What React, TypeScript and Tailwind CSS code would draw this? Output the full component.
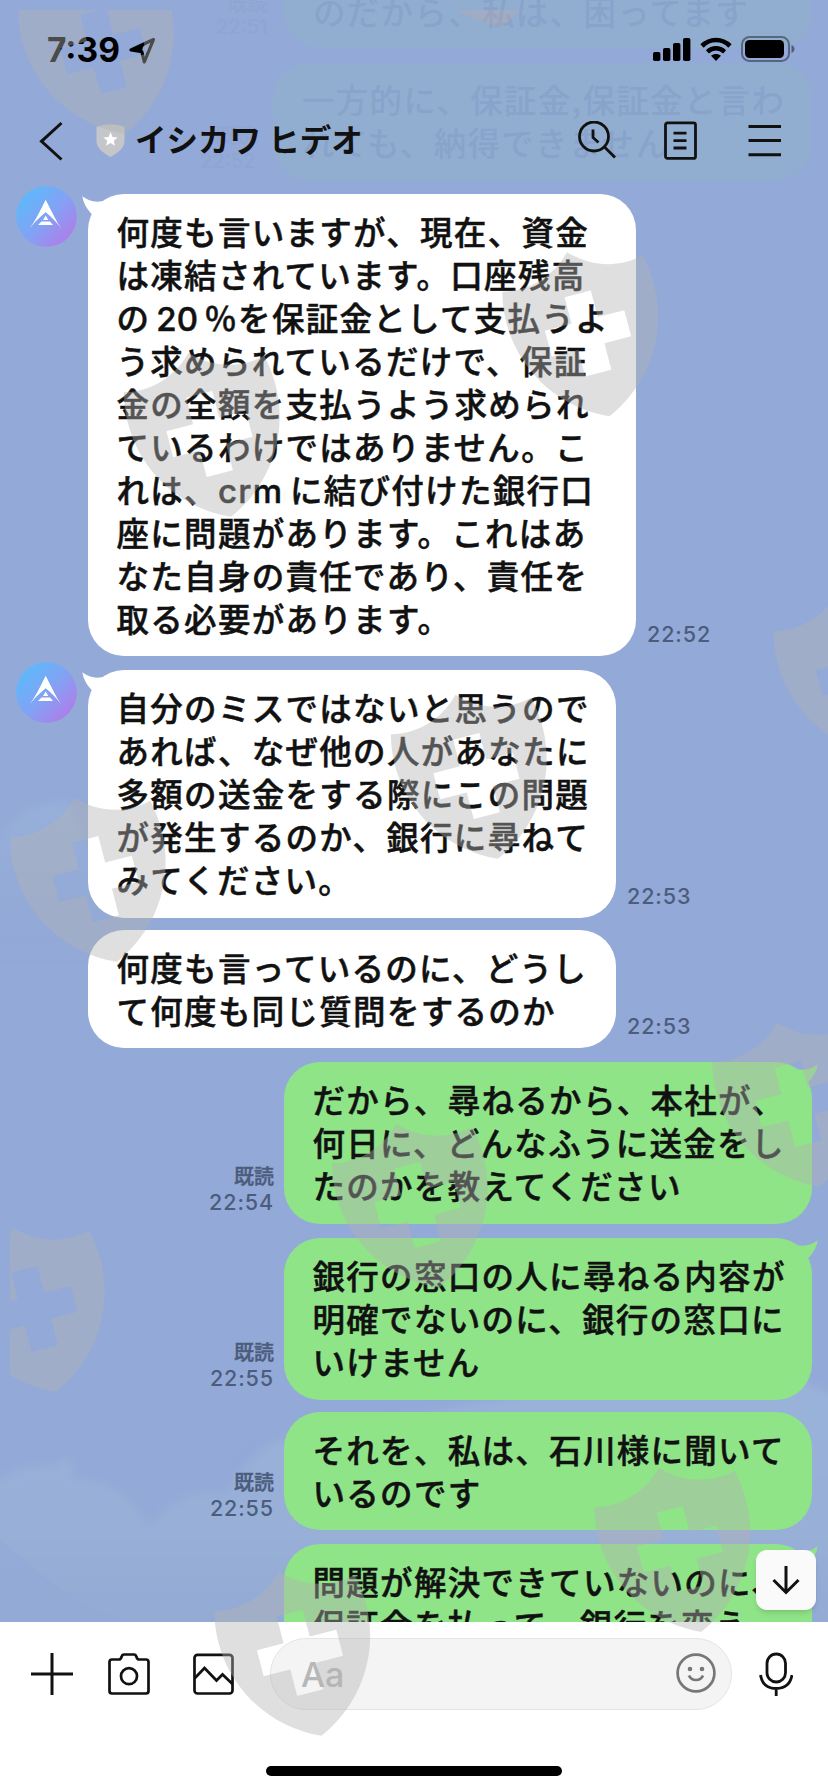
import type { ReactNode } from "react";

type Message = {
  side: "in" | "out";
  lines: ReactNode[];
  time?: string;
  first?: boolean;
  size: string;
  gap?: string;
};

const SHIELDS = [
  [103.5, 51],
  [209.5, 434],
  [588, 333.5],
  [476.5, 776],
  [95.5, 879],
  [859, 673],
  [798, 1104],
  [417.5, 1205],
  [34.5, 1309],
  [300, 1653],
  [680, 1549],
];

function Latin({ children, className }: { children: ReactNode; className: string }) {
  return <span className={`inline-block font-[Inter] font-medium ${className}`}>{children}</span>;
}

const MESSAGES: Message[] = [
  {
    side: "in",
    first: true,
    time: "22:52",
    size: "w-[548px] h-[462px]",
    lines: [
      "何度も言いますが、現在、資金",
      "は凍結されています。口座残高",
      <>の<Latin className="w-[54px] pl-[6px] text-[33px] tracking-normal">20</Latin>％を保証金として支払うよ</>,
      "う求められているだけで、保証",
      "金の全額を支払うよう求められ",
      "ているわけではありません。こ",
      <>れは、<Latin className="w-[72px] text-[33px] tracking-[1.3px]">crm</Latin>に結び付けた銀行口</>,
      "座に問題があります。これはあ",
      "なた自身の責任であり、責任を",
      "取る必要があります。",
    ],
  },
  {
    side: "in",
    first: true,
    time: "22:53",
    size: "w-[528px] h-[248px]",
    gap: "mt-[14px]",
    lines: [
      "自分のミスではないと思うので",
      "あれば、なぜ他の人があなたに",
      "多額の送金をする際にこの問題",
      "が発生するのか、銀行に尋ねて",
      "みてください。",
    ],
  },
  {
    side: "in",
    time: "22:53",
    size: "w-[528px] h-[118px]",
    gap: "mt-[12px]",
    lines: ["何度も言っているのに、どうし", "て何度も同じ質問をするのか"],
  },
  {
    side: "out",
    first: true,
    time: "22:54",
    size: "w-[528px] h-[162px]",
    gap: "mt-[14px]",
    lines: ["だから、尋ねるから、本社が、", "何日に、どんなふうに送金をし", "たのかを教えてください"],
  },
  {
    side: "out",
    first: true,
    time: "22:55",
    size: "w-[528px] h-[162px]",
    gap: "mt-[14px]",
    lines: ["銀行の窓口の人に尋ねる内容が", "明確でないのに、銀行の窓口に", "いけません"],
  },
  {
    side: "out",
    time: "22:55",
    size: "w-[528px] h-[118px]",
    gap: "mt-[12px]",
    lines: ["それを、私は、石川様に聞いて", "いるのです"],
  },
  {
    side: "out",
    first: true,
    size: "w-[528px] h-[162px]",
    gap: "mt-[14px]",
    lines: ["問題が解決できていないのに、", "保証金を払って、銀行を変え"],
  },
];

function Avatar() {
  return (
    <svg className="block size-[61px]" viewBox="0 0 61 61">
      <defs>
        <linearGradient id="avatar" x1="0.1" y1="0.15" x2="0.9" y2="0.9">
          <stop offset="0" stopColor="#5cb9fb" />
          <stop offset="0.5" stopColor="#83a2f4" />
          <stop offset="1" stopColor="#b07be8" />
        </linearGradient>
      </defs>
      <circle cx="30.5" cy="30.5" r="30.3" fill="url(#avatar)" />
      <path d="M29.7 14 C34 24 40 36 47.5 45 C41 37 35 30 29.7 26 C24 30 18 37 11.5 45 C19 36 25 24 29.7 14 Z" fill="#fff" />
      <path d="M29.7 14 L41 36 L29.7 26 L18.5 36 Z" fill="#fff" />
      <path d="M29.7 29.5 L32.3 34 H27 Z M25.5 35.6 H34 L37 39 H22 Z" fill="#fff" />
    </svg>
  );
}

function Tail({ side }: { side: "in" | "out" }) {
  return (
    <svg
      className={
        side === "in"
          ? "absolute -left-[6px] top-0 h-[36px] w-[36px] fill-white"
          : "absolute -right-[6px] top-0 h-[36px] w-[36px] -scale-x-100 fill-[#8fe488]"
      }
      viewBox="0 0 36 36"
    >
      <path d="M0.3 2.3 C6 6.5 12 8.5 19.5 7.3 L32 8 L22 30 L9.5 20 C4 14 1 8 0.3 2.3 Z" />
    </svg>
  );
}

function Row({ message }: { message: Message }) {
  const { side, lines, time, first, size, gap = "" } = message;
  const incoming = side === "in";
  return (
    <div className={`flex shrink-0 items-end ${gap} ${incoming ? "" : "justify-end pr-4"}`}>
      {incoming && (
        <div className="w-[72px] shrink-0 self-stretch">
          <div className="-mt-2">{first && <Avatar />}</div>
        </div>
      )}
      {!incoming && time && (
        <div className="mr-[10px] pb-2 text-right text-[20px] leading-[27px] text-[#4b5c7c]">
          <p className="font-medium [-webkit-text-stroke:0.4px_#4b5c7c]">既読</p>
          <p className="font-[Inter] text-[21.5px] font-medium tracking-[0.9px]">{time}</p>
        </div>
      )}
      <div
        className={`relative shrink-0 rounded-[36px] pt-[14.5px] pl-[28.5px] text-[32.5px] leading-[43px] font-medium tracking-[1.3px] whitespace-nowrap text-[#111] [-webkit-text-stroke:0.5px_#111] ${size} ${
          incoming ? "bg-white" : "bg-[#8fe488]"
        }`}
      >
        {first && <Tail side={side} />}
        {lines.map((line, i) => (
          <p key={i} className="relative h-[43px]">
            {line}
          </p>
        ))}
      </div>
      {incoming && (
        <p className="ml-[11px] pb-2 font-[Inter] text-[21.5px] leading-[27px] font-medium tracking-[0.9px] text-[#4b5c7c]">{time}</p>
      )}
    </div>
  );
}

// Soft clouds painted on the chat wallpaper
function Wallpaper() {
  return (
    <svg className="absolute inset-0 h-full w-full" viewBox="0 0 828 1792">
      <defs>
        <linearGradient id="cloud" x1="0" y1="0" x2="0" y2="1">
          <stop offset="0" stopColor="#9ab3da" />
          <stop offset="0.6" stopColor="#98afd7" />
          <stop offset="1" stopColor="#92aad3" />
        </linearGradient>
        <linearGradient id="puff" x1="0" y1="0" x2="0" y2="1">
          <stop offset="0" stopColor="#9ab6dc" stopOpacity="0.6" />
          <stop offset="1" stopColor="#93a9d7" stopOpacity="0" />
        </linearGradient>
        <filter id="soft">
          <feGaussianBlur stdDeviation="4" />
        </filter>
      </defs>
      <g filter="url(#soft)">
        <path d="M-10 850 C10 820 30 802 68 802 C75 820 90 840 96 870 V960 H-10 Z" fill="url(#puff)" />
        <path
          d="M-10 1490 C8 1468 30 1466 56 1466 C62 1456 72 1454 74 1480 C110 1478 132 1500 150 1526 C172 1496 200 1490 226 1494 C244 1466 262 1440 300 1436 L520 1396 C640 1370 760 1350 840 1400 V1640 H-10 Z"
          fill="url(#cloud)"
        />
      </g>
      <path d="M0 1540 C40 1570 60 1600 130 1622 H0 Z" fill="#93a9d7" opacity="0.6" />
    </svg>
  );
}

// Older messages showing faintly through the translucent header
function ScrolledMessages() {
  return (
    <div className="absolute inset-0 overflow-hidden text-[32.5px] leading-[43px] font-medium tracking-[1.3px] whitespace-nowrap text-[#89a3cb]">
      <div className="absolute top-[-60px] left-[284px] h-[108px] w-[528px] rounded-[36px] bg-[#91aed0] pt-[49px] pl-[29px]">
        のだから、私は、困ってます
      </div>
      <div className="absolute top-[63px] left-[273px] h-[117px] w-[539px] rounded-[36px] bg-[#91aed0] pt-[14px] pl-[29px]">
        <p>一方的に、保証金,保証金と言わ</p>
        <p>れても、納得できません</p>
      </div>
      <div className="absolute top-[-9px] left-[216px] text-right text-[20px] leading-[24px] tracking-normal text-[#8fa5d2]">
        <p>既読</p>
        <p className="font-[Inter]">22:51</p>
      </div>
      <div className="absolute top-[121px] left-[200px] text-right text-[20px] leading-[27px] tracking-normal text-[#8fa5d2]">
        <p>既読</p>
        <p className="font-[Inter]">22:52</p>
      </div>
    </div>
  );
}

function StatusBar() {
  return (
    <div className="relative flex h-[100px] items-start justify-between pt-[34px] pr-[33px] pl-[47px]">
      <div className="flex items-center gap-[8px]">
        <span className="font-[Inter] text-[33.5px] leading-[32px] font-bold text-black">7:39</span>
        <svg className="h-[28px] w-[28px]" viewBox="0 0 28 28">
          <path d="M25.5 3.5 L3 14 L13.8 15.6 L16.3 26 Z" fill="none" stroke="#000" strokeWidth="3.2" strokeLinejoin="round" />
          <path d="M18 7 L3 14 L13.8 15.6 L15 11 Z" />
        </svg>
      </div>
      <div className="flex items-center gap-[9px] pt-[2px]">
        <svg className="h-[25px] w-[38px]" viewBox="0 0 38 25">
          <rect x="0" y="15" width="7.4" height="9" rx="1.8" />
          <rect x="10" y="11" width="7.4" height="13" rx="1.8" />
          <rect x="20" y="6" width="7.4" height="18" rx="1.8" />
          <rect x="30" y="1" width="7.4" height="23" rx="1.8" />
        </svg>
        <svg className="h-[25px] w-[32px]" viewBox="0 0 32 25">
          <path d="M2 9 C10 1 22 1 30 9" fill="none" stroke="#000" strokeWidth="4.6" />
          <path d="M7.4 14.8 C12.5 10 19.5 10 24.6 14.8" fill="none" stroke="#000" strokeWidth="4.4" />
          <path d="M16 24 L11 18.8 C14 16.4 18 16.4 21 18.8 Z" />
        </svg>
        <svg className="h-[26px] w-[54px]" viewBox="0 0 54 26">
          <rect x="1" y="1" width="47" height="24" rx="7.5" fill="none" stroke="#000" strokeOpacity="0.4" strokeWidth="2" />
          <rect x="4" y="4" width="39" height="18" rx="4.5" />
          <path d="M50.5 9 C54.5 10.5 54.5 15.5 50.5 17 Z" fillOpacity="0.45" />
        </svg>
      </div>
    </div>
  );
}

function NavBar() {
  return (
    <div className="relative flex h-[86px] items-center pb-[5px] pl-[38px]">
      <svg className="h-[40px] w-[26px]" viewBox="0 0 26 40" fill="none" stroke="#111" strokeWidth="3">
        <path d="M23.5 2 L3.5 20.3 L23.5 38.5" />
      </svg>
      <svg className="ml-[32px] h-[34px] w-[29px]" viewBox="0 0 29 34">
        <path d="M14.5 0.5 C19 0.5 24 1 28.5 3 V17 C28.5 25 21 29 14.5 33 C8 29 0.5 25 0.5 17 V3 C5 1 10 0.5 14.5 0.5 Z" fill="#c5c6ca" />
        <path d="M14.5 8 L16.5 13 L21.6 13.4 L17.7 16.7 L19 21.8 L14.5 19 L10 21.8 L11.3 16.7 L7.4 13.4 L12.5 13 Z" fill="#fff" />
      </svg>
      <h1 className="-mt-[6px] ml-[10px] text-[31.5px] leading-[40px] font-bold whitespace-nowrap text-[#111]">イシカワ ヒデオ</h1>
      <div className="ml-auto flex items-center pr-[46px]">
        <svg className="h-[40px] w-[40px]" viewBox="0 0 40 40" fill="none" stroke="#111" strokeWidth="2.8">
          <circle cx="17" cy="15.5" r="14.5" />
          <path d="M16 8.5 V16.5 L21.5 21.5" />
          <path d="M27.5 26 L38 36.5" />
        </svg>
        <svg className="ml-[47px] h-[40px] w-[34px]" viewBox="0 0 34 40" fill="none" stroke="#111" strokeWidth="2.8">
          <rect x="1.5" y="1.8" width="30" height="35.6" rx="2" />
          <path d="M9.5 12.2 H22.5 M9.5 19.7 H22.5 M9.5 27 H22.5" />
        </svg>
        <svg className="ml-[50px] h-[40px] w-[34px]" viewBox="0 0 34 40" fill="none" stroke="#111" strokeWidth="3">
          <path d="M0.5 5.4 H33 M0.5 19.6 H33 M0.5 33.8 H33" />
        </svg>
      </div>
    </div>
  );
}

function InputBar() {
  return (
    <footer className="relative flex h-[170px] flex-col items-center bg-white pt-[16px]">
      <div className="flex h-[72px] w-full items-center pr-[34px] pl-[31px]">
        <svg className="h-[42px] w-[42px]" viewBox="0 0 42 42" stroke="#111" strokeWidth="3">
          <path d="M21 0 V42 M0 21 H42" />
        </svg>
        <svg className="ml-[35px] h-[42px] w-[42px]" viewBox="0 0 42 42" fill="none" stroke="#111" strokeWidth="2.7" strokeLinejoin="round">
          <path d="M4 6.5 H11 C12.5 6.5 13 5.5 13.5 4 C14 2.2 14.5 1.5 16 1.5 H26 C27.5 1.5 28 2.2 28.5 4 C29 5.5 29.5 6.5 31 6.5 H38 Q40.5 6.5 40.5 9 V38 Q40.5 40.5 38 40.5 H4 Q1.5 40.5 1.5 38 V9 Q1.5 6.5 4 6.5 Z" />
          <circle cx="21" cy="23.2" r="8" />
        </svg>
        <svg className="ml-[43px] h-[42px] w-[41px]" viewBox="0 0 41 42" fill="none" stroke="#111" strokeWidth="2.7">
          <rect x="1.5" y="1.8" width="38" height="38.7" rx="3" />
          <path d="M1.5 25.5 L11.5 15 L23.5 27.5 L29.5 21.5 L39.5 31" />
        </svg>
        <div className="ml-[36px] flex h-[72px] w-[462px] items-center justify-between rounded-full border border-[#e4e4e4] bg-[#f4f4f4] pr-[15px] pl-[30px]">
          <span className="font-[Inter] text-[34px] font-medium text-[#b7b7b7]">Aa</span>
          <svg className="-mt-[2px] h-[40px] w-[40px]" viewBox="0 0 40 40" fill="none" stroke="#777" strokeWidth="2.7">
            <circle cx="20" cy="20" r="18.4" />
            <circle cx="14" cy="16" r="2.3" fill="#777" stroke="none" />
            <circle cx="26" cy="16" r="2.3" fill="#777" stroke="none" />
            <path d="M13 22.5 C15.5 28.5 24.5 28.5 27 22.5" />
          </svg>
        </div>
        <svg className="ml-[27px] h-[44px] w-[34px] shrink-0" viewBox="0 0 34 44" fill="none" stroke="#111" strokeWidth="2.8">
          <rect x="8" y="2" width="18.5" height="28" rx="9.2" />
          <path d="M1.5 23 C3 32 9 36.5 17.2 36.5 C25.5 36.5 31.5 32 33 23 M17.2 36.5 V44" />
        </svg>
      </div>
      <div className="mt-[56px] h-[10px] w-[296px] rounded-full bg-black" />
    </footer>
  );
}

function Watermarks() {
  return (
    <svg className="pointer-events-none absolute top-[10px] left-[10px] h-[1782px] w-[818px] overflow-hidden" viewBox="10 10 818 1782">
      <defs>
        <path
          id="shield"
          fillRule="evenodd"
          d="M0 -84 C18 -65 45 -55 72.5 -62 C88 2 54 62 0 85.5 C-54 62 -88 2 -72.5 -62 C-45 -55 -18 -65 0 -84 Z M-13.5 -41 V-13.5 H-41 V13.5 H-13.5 V41 H13.5 V13.5 H41 V-13.5 H13.5 V-41 Z"
        />
      </defs>
      {SHIELDS.map(([x, y]) => (
        <use key={`${x}-${y}`} href="#shield" transform={`translate(${x} ${y}) rotate(-14.5)`} fill="#b3b3b3" fillOpacity="0.42" />
      ))}
      <use href="#shield" transform="translate(481 -56) rotate(-14.5)" fill="#c0a8a4" fillOpacity="0.3" />
    </svg>
  );
}

export default function App() {
  return (
    <div className="relative flex h-[1792px] w-[828px] flex-col overflow-hidden bg-[#93a9d7] font-['Noto_Sans_CJK_JP',sans-serif]">
      <Wallpaper />
      <header className="relative h-[186px] shrink-0">
        <ScrolledMessages />
        <StatusBar />
        <NavBar />
      </header>
      <main className="relative flex h-[1436px] shrink-0 flex-col overflow-hidden pl-4">
        <div className="flex flex-col pt-2">
          {MESSAGES.map((message, i) => (
            <Row key={i} message={message} />
          ))}
        </div>
        <button className="absolute right-[12px] bottom-[12px] flex size-[60px] items-center justify-center rounded-[11px] bg-[#fafafa] shadow-md">
          <svg className="h-[30px] w-[28px]" viewBox="0 0 28 30" fill="none" stroke="#111" strokeWidth="3">
            <path d="M14 1 V27 M1.5 15 L14 27.5 L26.5 15" />
          </svg>
        </button>
      </main>
      <InputBar />
      <Watermarks />
    </div>
  );
}
